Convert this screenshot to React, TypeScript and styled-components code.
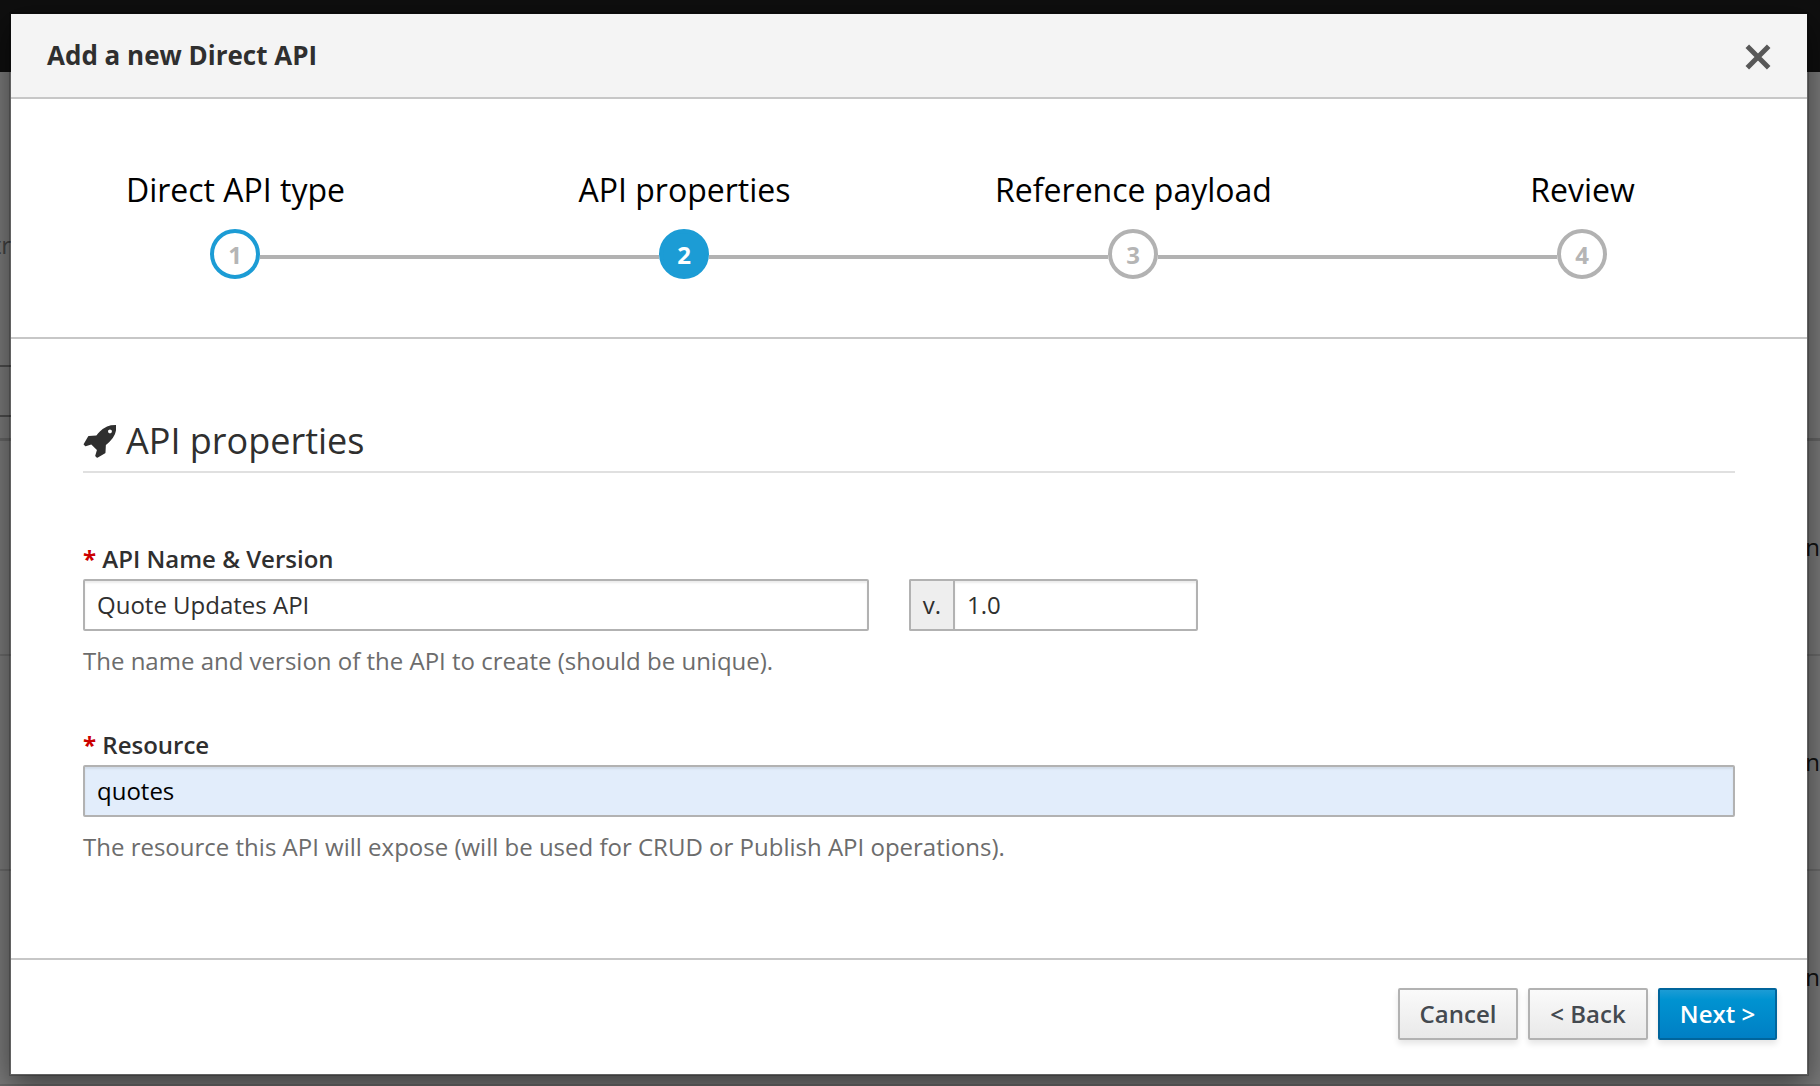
import React from "react";
import styled, { createGlobalStyle, css } from "styled-components";

const GlobalStyle = createGlobalStyle`
  *, *::before, *::after { box-sizing: border-box; }
  body {
    margin: 0;
    overflow: hidden;
    background: #777;
    color: #2f2f2f;
    font: 24px/40px "Open Sans", "Noto Sans", sans-serif;
  }
  input, button { font: inherit; }
`;

const Screen = styled.div`
  display: grid;
  width: 1820px;
  height: 1086px;
  overflow: hidden;
  > * { grid-area: 1 / 1; }
`;

const Page = styled.div`
  display: flex;
  flex-direction: column;
  background: #7b7b7b;
`;

const Masthead = styled.div`
  flex: none;
  height: 72px;
  background: #0f0f0f;
`;

const Crumb = styled.div`
  display: flex;
  justify-content: flex-end;
  width: 11px;
  height: 295px;
  padding-top: 153px;
  border-bottom: 2px solid #4d4d4d;
  color: #424242;
  white-space: nowrap;
`;

const Toolbar = styled.div`
  flex: none;
  width: 11px;
  height: 50px;
  border-bottom: 2px solid #4d4d4d;
`;

const ListTop = styled.div`
  flex: none;
  height: 24px;
  border-bottom: 3px solid #666;
`;

const ListRow = styled.div`
  display: flex;
  flex: none;
  align-items: center;
  justify-content: flex-end;
  height: 215px;
  padding-bottom: 2px;
  border-bottom: 2px solid #6b6b6b;
  color: #111;
`;

const Modal = styled.div`
  display: flex;
  flex-direction: column;
  z-index: 1;
  margin: 12px 11px 10px 9px;
  border: 2px solid rgba(0, 0, 0, 0.2);
  background: #fff;
  background-clip: padding-box;
  box-shadow: 0 10px 30px rgba(0, 0, 0, 0.5);
`;

const Header = styled.header`
  display: flex;
  align-items: center;
  justify-content: space-between;
  flex: none;
  height: 85px;
  padding: 0 36px;
  border-bottom: 2px solid #c7c7c7;
  background: #f4f4f4;
`;

const Title = styled.h1`
  margin: 0;
  padding-bottom: 2px;
  font-size: 26px;
  font-weight: 700;
`;

const CloseButton = styled.button`
  display: flex;
  padding: 2px 0 0;
  border: 0;
  background: none;
  color: #585858;
`;

const Steps = styled.ol`
  display: grid;
  grid-template-columns: repeat(4, 1fr);
  flex: none;
  height: 240px;
  margin: 0;
  padding: 64px 0 0;
  border-bottom: 2px solid #c7c7c7;
  list-style: none;
`;

const Step = styled.li`
  display: flex;
  flex-direction: column;
  align-items: center;
  gap: 12px;
  color: #000;
  font-size: 32px;
  line-height: 54px;
`;

const Track = styled.div`
  display: flex;
  width: 100%;
`;

const Connector = styled.span<{ $visible: boolean }>`
  flex: 1;
  height: 4px;
  margin-top: 26px;
  background: ${(p) => (p.$visible ? "#b2b2b2" : "transparent")};
  &:first-child { flex: 0 0 199px; }
`;

type StepState = "done" | "active" | "todo";

const stepStyles = {
  done: css`border-color: #1c9cd5; color: #b5b5b5;`,
  active: css`border-color: #1c9cd5; background: #1c9cd5; color: #fff;`,
  todo: css`border-color: #b2b2b2; color: #b5b5b5;`,
};

const StepNumber = styled.span<{ $state: StepState }>`
  display: flex;
  align-items: center;
  justify-content: center;
  width: 50px;
  height: 50px;
  padding-top: 2px;
  border: 4px solid;
  border-radius: 50%;
  font-size: 24px;
  font-weight: 700;
  line-height: 40px;
  ${(p) => stepStyles[p.$state]}
`;

const Body = styled.main`
  flex: 1;
  padding: 72px 72px 0;
`;

const SectionTitle = styled.h2`
  display: flex;
  align-items: center;
  gap: 9.6px;
  height: 62px;
  margin: 0 0 66px;
  border-bottom: 2px solid #e0e0e0;
  font-size: 36px;
  font-weight: 400;
  svg {
    flex: none;
    width: 33.4px;
    height: 33.4px;
    margin-top: 2px;
  }
`;

const Field = styled.div`
  display: flex;
  flex-direction: column;
  margin-bottom: 44px;
`;

const Label = styled.label`
  font-weight: 600;
`;

const Required = styled.span`
  color: #c00;
  font-weight: 700;
`;

const Controls = styled.div`
  display: flex;
  gap: 40px;
`;

const Input = styled.input<{ $width?: string; $autofill?: boolean }>`
  width: ${(p) => p.$width ?? "100%"};
  height: 52px;
  padding: 2px 12px 3px;
  border: 2px solid #b2b2b2;
  border-radius: 2px;
  outline: 0;
  background: ${(p) => (p.$autofill ? "#e2edfb" : "#fff")};
  color: ${(p) => (p.$autofill ? "#000" : "#2f2f2f")};
  box-shadow: inset 0 2px 2px rgba(3, 3, 3, 0.075);
`;

const InputGroup = styled.div`
  display: flex;
  width: 289px;
  ${Input} { border-radius: 0 2px 2px 0; }
`;

const Addon = styled.span`
  display: flex;
  align-items: center;
  justify-content: center;
  flex: none;
  width: 44px;
  height: 52px;
  padding-bottom: 1px;
  border: 2px solid #b2b2b2;
  border-right: 0;
  border-radius: 2px 0 0 2px;
  background: #eee;
`;

const Help = styled.p`
  margin: 10px 0 0;
  color: #6c6c6c;
`;

const Footer = styled.footer`
  display: flex;
  justify-content: flex-end;
  gap: 10px;
  flex: none;
  height: 116px;
  padding: 28px 30px 0 0;
  border-top: 2px solid #c7c7c7;
`;

const Button = styled.button<{ $primary?: boolean }>`
  width: ${(p) => (p.$primary ? 119 : 120)}px;
  height: 52px;
  padding: 0 0 1px;
  border: 2px solid ${(p) => (p.$primary ? "#00659c" : "#b2b2b2")};
  border-radius: 2px;
  background: ${(p) =>
    p.$primary
      ? "linear-gradient(#1c9cd5, #0093d1 20%, #007fc4)"
      : "linear-gradient(#fafafa, #e9e9e9)"};
  box-shadow: 0 4px 6px rgba(3, 3, 3, 0.1);
  color: ${(p) => (p.$primary ? "#fff" : "#444a50")};
  font-weight: 600;
  white-space: nowrap;
`;

const RocketIcon = () => (
  <svg viewBox="0 0 1664 1664" fill="currentColor" aria-hidden="true">
    <path
      transform="translate(0 1408) scale(1 -1)"
      d="M1440 1088q0 40-28 68t-68 28-68-28-28-68 28-68 68-28 68 28 28 68zM1664 1376q0-249-75.5-430.5t-253.5-360.5q-81-80-195-176l-20-379q-2-16-16-26l-384-224q-7-4-16-4-12 0-23 9l-64 64q-13 14-8 32l85 276-281 281-276-85q-3-1-9-1-14 0-23 9l-64 64q-17 19-5 39l224 384q10 14 26 16l379 20q96 114 176 195 188 187 358 258t431 71q14 0 24-9.5t10-22.5z"
      fillRule="evenodd"
    />
  </svg>
);

const steps: { label: string; state: StepState }[] = [
  { label: "Direct API type", state: "done" },
  { label: "API properties", state: "active" },
  { label: "Reference payload", state: "todo" },
  { label: "Review", state: "todo" },
];

export default function App() {
  return (
    <Screen>
      <GlobalStyle />
      <Page>
        <Masthead />
        <Crumb>tr</Crumb>
        <Toolbar />
        <ListTop />
        <ListRow>n</ListRow>
        <ListRow>n</ListRow>
        <ListRow>n</ListRow>
      </Page>
      <Modal role="dialog">
        <Header>
          <Title>Add a new Direct API</Title>
          <CloseButton aria-label="Close">
            <svg width="26" height="26" viewBox="0 0 26 26">
              <path
                d="M2.3 2.3L23.7 23.7M23.7 2.3L2.3 23.7"
                stroke="currentColor"
                strokeWidth="5"
              />
            </svg>
          </CloseButton>
        </Header>
        <Steps>
          {steps.map((step, i) => (
            <Step key={step.label}>
              {step.label}
              <Track>
                <Connector $visible={i > 0} />
                <StepNumber $state={step.state}>{i + 1}</StepNumber>
                <Connector $visible={i < steps.length - 1} />
              </Track>
            </Step>
          ))}
        </Steps>
        <Body>
          <SectionTitle>
            <RocketIcon /> API properties
          </SectionTitle>
          <Field>
            <Label>
              <Required>*</Required> API Name &amp; Version
            </Label>
            <Controls>
              <Input $width="786px" defaultValue="Quote Updates API" />
              <InputGroup>
                <Addon>v.</Addon>
                <Input defaultValue="1.0" />
              </InputGroup>
            </Controls>
            <Help>The name and version of the API to create (should be unique).</Help>
          </Field>
          <Field>
            <Label>
              <Required>*</Required> Resource
            </Label>
            <Input $autofill defaultValue="quotes" />
            <Help>
              The resource this API will expose (will be used for CRUD or Publish API operations).
            </Help>
          </Field>
        </Body>
        <Footer>
          <Button>Cancel</Button>
          <Button>&lt; Back</Button>
          <Button $primary>Next &gt;</Button>
        </Footer>
      </Modal>
    </Screen>
  );
}
